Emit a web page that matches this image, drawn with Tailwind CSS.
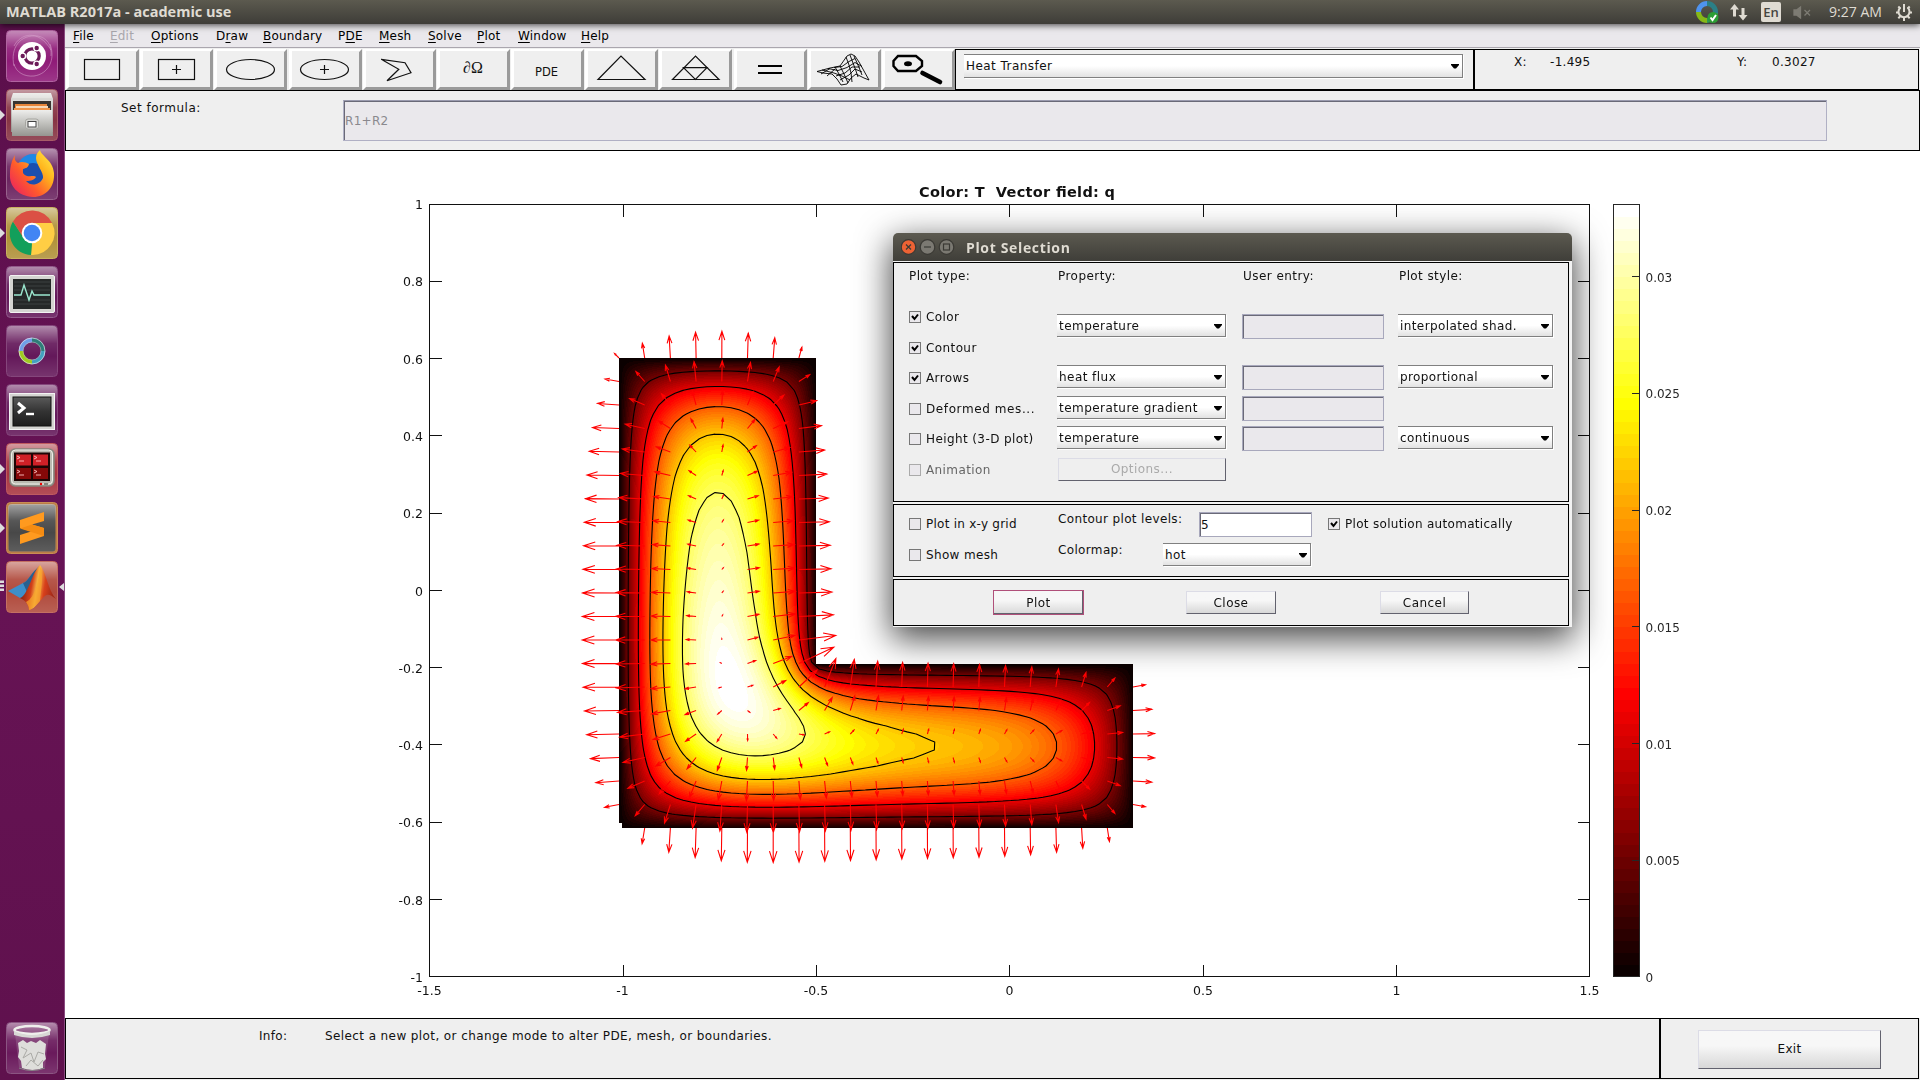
<!DOCTYPE html>
<html lang="en">
<head>
<meta charset="utf-8">
<title>MATLAB R2017a - academic use</title>
<script src="https://cdn.jsdelivr.net/npm/@tailwindcss/browser@4"></script>
</head>
<body class="w-[1920px] h-[1080px] overflow-hidden bg-white font-['DejaVu_Sans',sans-serif] text-[12px] leading-[14px] tracking-[0.3px] text-[#111] flex flex-col">

<header class="relative z-20 h-6 shrink-0 flex items-center bg-linear-to-b from-[#5c5a4f] to-[#3e3d38] shadow-[0_1px_7px_rgba(0,0,0,0.75)] text-[#dfdbd2]">
  <div class="pl-[6px] w-[1696px] font-['Open_Sans',sans-serif] font-bold text-[14.5px] tracking-[0px] whitespace-nowrap">MATLAB R2017a - academic use</div>
  <svg class="w-[224px] h-6" viewBox="1696 0 224 24" fill="none">
    <g stroke-width="5"><path d="M1698.500 12a8.500 8.500 0 0 1 8.500-8.500" stroke="#4f93ee"/><path d="M1707 3.500a8.500 8.500 0 0 1 8.500 8.500v2" stroke="#2b7f86"/><path d="M1698.500 12a8.500 8.500 0 0 0 8.500 8.500" stroke="#86b817"/><path d="M1715.500 13a8.500 8.500 0 0 1-8.500 7.500" stroke="#2f9a54"/></g>
    <circle cx="1713" cy="17.500" r="5.500" fill="#2c9e35"/><path d="M1710.500 17.500l2 2.500 3.500-5" stroke="#fff" stroke-width="2"/>
    <path d="M1734.500 4l4.500 5.500h-3v7h-3v-7h-3zM1743 20.500l4.500-5.500h-3v-7h-3v7h-3z" fill="#dfdbd2"/>
    <rect x="1761" y="2" width="20" height="20" rx="2" fill="#dfdbd2"/>
    <text x="1771" y="17" text-anchor="middle" fill="#46453f" font-family="Open Sans" font-size="13" font-weight="600" letter-spacing="0">En</text>
    <path d="M1794 10h2.500l4-3v11l-4-3h-2.500zM1804.500 10l5.500 5.500M1810 10l-5.500 5.500" stroke="#7d7b73" stroke-width="1.300" fill="#7d7b73"/>
    <text x="1829" y="17" fill="#dfdbd2" font-family="Open Sans" font-size="14" letter-spacing="0" textLength="53" lengthAdjust="spacingAndGlyphs">9:27 AM</text>
    <path d="M1900.500 7.500a5.500 5.500 0 1 0 7 0M1904 4v8" stroke="#dfdbd2" stroke-width="2"/>
    <path d="M1896 12.500h3M1909 12.500h3M1898.300 6.500l2 2M1909.700 6.500l-2 2M1898.300 18.300l2-2M1909.700 18.300l-2-2M1904 18v3" stroke="#dfdbd2" stroke-width="2"/>
  </svg>
</header>

<div class="flex-1 flex min-h-0">
  <aside class="relative w-[65px] shrink-0 bg-linear-to-b from-[#5b0f4b] via-[#671355] to-[#5f114d] border-r border-[#8a4a80] pl-[6px] pt-[6px] flex flex-col gap-[7px]">
    <svg class="size-[52px]" viewBox="0 0 52 52"><defs><linearGradient id="gl" x1="0" y1="0" x2="0" y2="1"><stop offset="0" stop-color="#fff" stop-opacity=".5"/><stop offset=".35" stop-color="#fff" stop-opacity=".08"/><stop offset=".6" stop-color="#fff" stop-opacity="0"/><stop offset="1" stop-color="#fff" stop-opacity=".12"/></linearGradient><linearGradient id="mt" x1="0" y1="0" x2="0" y2="1"><stop offset="0" stop-color="#eeeeec"/><stop offset="1" stop-color="#959590"/></linearGradient><linearGradient id="dk" x1="0" y1="0" x2="0" y2="1"><stop offset="0" stop-color="#5a5a5a"/><stop offset=".5" stop-color="#333"/><stop offset="1" stop-color="#1d1d1d"/></linearGradient></defs>
      <rect x=".5" y=".5" width="51" height="51" rx="4" fill="#8f1b78" stroke="#b063a0"/><rect x="1" y="1" width="50" height="50" rx="4" fill="url(#gl)"/>
      <g fill="none" stroke="#d7a3cc" stroke-opacity=".55"><path d="M8 36C4 18 14 4 32 6c9 2 14 9 13 20M44 14c6 16-2 30-16 32-10 1-18-4-20-12M8 16C14 4 32-2 45 20"/></g>
      <circle cx="26" cy="26" r="14" fill="#fff"/><circle cx="26" cy="26" r="7.200" fill="none" stroke="#6c1a58" stroke-width="3.200"/>
      <g stroke="#fff" stroke-width="1.400" fill="#6c1a58"><circle cx="16.700" cy="26" r="2.900"/><circle cx="30.700" cy="18" r="2.900"/><circle cx="30.700" cy="34" r="2.900"/></g></svg>
    <svg class="size-[52px]" viewBox="0 0 52 52"><rect x=".5" y=".5" width="51" height="51" rx="4" fill="#873444" stroke="#a85c68"/><rect x="1" y="1" width="50" height="50" rx="4" fill="url(#gl)"/>
      <path d="M7 4h38l2 6v33H5V10z" fill="url(#mt)"/><path d="M5 10h42" stroke="#d0d0cc"/><rect x="7" y="12" width="38" height="11" fill="#3a3530"/><path d="M9 15h32v6H9z" fill="#e8863a"/><path d="M10 17h32v5H10z" fill="#f7d9b8"/><path d="M8 19h36v4H8z" fill="#f0954a"/><path d="M6 21h40l1 26H6z" fill="url(#mt)"/><rect x="19.500" y="30" width="13" height="10" rx="2.500" fill="#d8d8d5" stroke="#a5a5a0"/><rect x="22" y="32.500" width="8" height="5.500" fill="#fff" stroke="#444"/></svg>
    <svg class="size-[52px]" viewBox="0 0 52 52"><defs><linearGradient id="ff" x1="1" y1="0" x2="0" y2=".9"><stop offset="0" stop-color="#fff44f"/><stop offset=".35" stop-color="#ffb31c"/><stop offset=".65" stop-color="#ff5a2c"/><stop offset="1" stop-color="#e91e63"/></linearGradient></defs><rect x=".5" y=".5" width="51" height="51" rx="4" fill="#6b2460" stroke="#98628c"/><rect x="1" y="1" width="50" height="50" rx="4" fill="url(#gl)"/>
      <circle cx="27" cy="22" r="16" fill="#1e88e5"/><circle cx="27" cy="26" r="11" fill="#1b4fae"/>
      <path d="M9 7c-1 5 1 7 3 8 3-2 8-1 11 1-1 4-3 4-6 5 0 3-1 5 4 7 4 1 7-1 9 1-2 4-8 4-10 4 5 6 14 4 17-3 1-5-7-14-7-20 0-4 2-6 4-8 1 6 13 10 14 23 1 14-8 24-21 24C12 48 3 38 4 26c0-8 2-14 5-19z" fill="url(#ff)"/></svg>
    <svg class="size-[52px]" viewBox="0 0 52 52"><rect x=".5" y=".5" width="51" height="51" rx="4" fill="#b09139" stroke="#c8b060"/><rect x="1" y="1" width="50" height="50" rx="4" fill="url(#gl)"/>
      <path d="M46 16H26v20L25 48A22 22 0 0 0 46 16z" fill="#ffce44"/><path d="M26 36L25 48A22 22 0 0 1 7 14.500L17 30z" fill="#129f5b"/><path d="M7 14.500A22 22 0 0 1 46 16H26L17 30z" fill="#db5044"/><circle cx="26" cy="26" r="10.300" fill="#fff"/><circle cx="26" cy="26" r="8.300" fill="#4285f4"/></svg>
    <svg class="size-[52px]" viewBox="0 0 52 52"><rect x=".5" y=".5" width="51" height="51" rx="4" fill="#64185a" stroke="#935a8c"/><rect x="1" y="1" width="50" height="50" rx="4" fill="url(#gl)"/><rect x="3.500" y="9.500" width="45" height="37" rx="1.500" fill="#d4d4d1" stroke="#f3f3f3"/><rect x="7" y="13" width="38" height="30" fill="#252828"/><path d="M8 16h36M8 20h36M8 24h36M8 34h36M8 38h36" stroke="#454c4a" stroke-width=".7"/><path d="M8 29h7l3-10 5 15 3-9 2 4h16" fill="none" stroke="#9be8cf" stroke-width="1.400"/></svg>
    <svg class="size-[52px]" viewBox="0 0 52 52"><rect x=".5" y=".5" width="51" height="51" rx="4" fill="#64185a" stroke="#85467c"/><rect x="1" y="1" width="50" height="50" rx="4" fill="url(#gl)"/><g fill="none" stroke-width="4.500"><path d="M15 26a11 11 0 0 1 11-11" stroke="#6f9ee8"/><path d="M26 15a11 11 0 0 1 11 11" stroke="#2e7c78"/><path d="M37 26a11 11 0 0 1-11 11" stroke="#43a0c0"/><path d="M15 26a11 11 0 0 0 11 11" stroke="#9fcb20"/></g><circle cx="26" cy="26" r="13" fill="none" stroke="#e5e5f0" stroke-opacity=".7"/><circle cx="26" cy="26" r="9" fill="none" stroke="#ccc" stroke-opacity=".5"/></svg>
    <svg class="size-[52px]" viewBox="0 0 52 52"><rect x=".5" y=".5" width="51" height="51" rx="4" fill="#64185a" stroke="#85467c"/><rect x="1" y="1" width="50" height="50" rx="4" fill="url(#gl)"/><rect x="3.500" y="9.500" width="45" height="36" fill="#d4d4d1" stroke="#f3f3f3"/><rect x="7" y="13" width="38" height="29" fill="url(#dk)" stroke="#111"/><path d="M12 19l6 5-6 5" fill="none" stroke="#fff" stroke-width="3"/><path d="M20 30h8" stroke="#fff" stroke-width="2.400"/></svg>
    <svg class="size-[52px]" viewBox="0 0 52 52"><rect x=".5" y=".5" width="51" height="51" rx="4" fill="#a83540" stroke="#c05a60"/><rect x="1" y="1" width="50" height="50" rx="4" fill="url(#gl)"/><rect x="4" y="6" width="44" height="37" rx="5" fill="#b9b9b0" stroke="#85857c" stroke-width="1.500"/><rect x="5.500" y="7" width="41" height="34" rx="4" fill="none" stroke="#eeeee8"/><rect x="8" y="9.500" width="36" height="28.500" fill="#1c0505"/><path d="M10 11.500h15v11H10zM27 11.500h15v11H27z" fill="#cf2027"/><path d="M10 25h15v11H10zM27 25h15v11H27z" fill="#850808"/><g fill="none" stroke="#ffc2c2" stroke-width=".9"><path d="M11 13l3 1.500-3 1.500M13 18h5M28 13l3 1.500-3 1.500M30 18h5M11 27l3 1.500-3 1.500M13 32h5M28 27l3 1.500-3 1.500M30 32h5"/></g><circle cx="35" cy="41" r="1.200" fill="#e00"/><rect x="38" y="40" width="4" height="2" fill="#85857c"/></svg>
    <svg class="size-[52px]" viewBox="0 0 52 52"><rect x=".5" y=".5" width="51" height="51" rx="4" fill="#bb7c45" stroke="#c98d55"/><rect x="2.500" y="2.500" width="47" height="47" rx="3" fill="#484848"/><rect x="2" y="2" width="48" height="48" rx="4" fill="url(#gl)"/><path d="M14 18l24-8v9l-12 3.500L38 26v8L14 42v-9l11-3.500L14 26z" fill="#ff9a1f"/><path d="M26 22.500L38 26v8L14 26.500z" fill="#f58c12"/></svg>
    <svg class="size-[52px]" viewBox="0 0 52 52"><defs><linearGradient id="ml" x1="0" y1="0" x2="1" y2=".2"><stop offset="0" stop-color="#5a1010"/><stop offset=".4" stop-color="#d2401a"/><stop offset=".55" stop-color="#fbc04a"/><stop offset=".75" stop-color="#d8401c"/><stop offset="1" stop-color="#a32a17"/></linearGradient></defs><rect x=".5" y=".5" width="51" height="51" rx="4" fill="#b04a3c" stroke="#c47062"/><rect x="1" y="1" width="50" height="50" rx="4" fill="url(#gl)"/><path d="M2 30l15-8c5-1 9-12 17-17-6 10-9 24-15 31l-5 1z" fill="#3d8fca"/><path d="M17 22c5-1 9-12 17-17-5 8-8 20-13 26z" fill="#28608f"/><path d="M14 37c8-2 12-26 20-33 6 7 8 25 16 34-7-5-9-6-14 0-5 5-8 10-13 11 0-5-4-10-9-12z" fill="url(#ml)"/><path d="M34 5c4 8 1 24 0 35-4 4-7 8-11 9 0-4-2-6-3-8C30 36 32 20 34 5z" fill="#f5a32c" fill-opacity=".75"/></svg>
    <svg class="size-[52px] mt-auto mb-[6px]" viewBox="0 0 52 52"><rect x=".5" y=".5" width="51" height="51" rx="4" fill="#6a1a5c" stroke="#8b5482"/><rect x="1" y="1" width="50" height="50" rx="4" fill="url(#gl)"/><path d="M9 12l4 33q13 6 26 0l4-33z" fill="#fff" fill-opacity=".13"/><path d="M12 21l5-3 4 3 4-2 5 2 4-3 6 4-1 10 1 5-3 3v6q-10 4-21 0l-1-7-3-4 1-6z" fill="#dededb"/><path d="M15 25l6 3-4 8 8-5 3 9 4-10 6 2M20 44l5-6 7 6 5-6" fill="none" stroke="#aaaaa6"/><ellipse cx="26" cy="8" rx="17.500" ry="4" fill="none" stroke="#efefec" stroke-width="2.600"/><path d="M8 9q18 8 36 0v4q-18 6-36 0z" fill="#d8d8d5"/><path d="M13 46q13 5 26 0" fill="none" stroke="#888"/></svg>
    <svg class="absolute left-0 top-0 w-[64px] h-[600px] pointer-events-none" viewBox="0 24 64 600" fill="#ddd"><path d="M0 110l5 5-5 5zM0 228l5 5-5 5zM0 464l5 5-5 5zM0 523l5 5-5 5zM64 583l-5 4 5 4zM0 580.500h4v2.500H0zM0 584.500h4v2.500H0zM0 588.500h4v2.500H0z"/></svg>
  </aside>

  <main class="flex-1 flex flex-col min-w-0">
    <nav class="h-6 shrink-0 bg-[#eae8ec] border-b border-[#aaa6ae] flex pl-[8px] pt-[5px] tracking-[0.2px] text-black [&_u]:underline-offset-2">
      <span class="w-[37px]"><u>F</u>ile</span><span class="w-[41px] text-[#a9a7ad]"><u>E</u>dit</span><span class="w-[65px]"><u>O</u>ptions</span><span class="w-[47px]">D<u>r</u>aw</span><span class="w-[75px]"><u>B</u>oundary</span><span class="w-[41px]">P<u>D</u>E</span><span class="w-[49px]"><u>M</u>esh</span><span class="w-[49px]"><u>S</u>olve</span><span class="w-[41px]"><u>P</u>lot</span><span class="w-[63px]"><u>W</u>indow</span><span><u>H</u>elp</span>
    </nav>

    <div class="h-[42px] shrink-0 flex bg-[#efefef]">
      <svg class="w-[890px] h-[42px] shrink-0" viewBox="65 48 890 42" fill="none" stroke="#111" stroke-width="1.200">
        <g id="frames" stroke="none"></g>
        <rect x="84.500" y="59.500" width="35" height="20"/>
        <rect x="158.500" y="59.500" width="36" height="20"/><path d="M172 69.500h9M176.500 65v9"/>
        <ellipse cx="250.500" cy="69.500" rx="24" ry="10"/>
        <ellipse cx="324.500" cy="69.500" rx="24" ry="10"/><path d="M320 69.500h9M324.500 65v9"/>
        <path d="M381.200 59.300L405 62.700l6 10-24 8 11.800-11.400z"/>
        <text x="463" y="73" font-family="Liberation Serif" font-size="16" fill="#111" stroke="none" letter-spacing="0">∂Ω</text>
        <text x="535" y="76" font-size="11.500" fill="#111" stroke="none" letter-spacing="0">PDE</text>
        <path d="M598 79.500L621 56l24 23.500z"/>
        <path d="M672.500 79.500l23-23.500 23.500 23.500zM683.500 67.700h23.500L695.400 79.500z"/>
        <path d="M758 66h24M758 73h24" stroke="#000" stroke-width="2"/>
        <g stroke="#000" stroke-width=".9"><path d="M817 71.500l13-3.500 10-2 7-10 4-2 4 2 4 6 5 9 5 9-5-2-8-4-5 4-4 6-6 1-4-6-5-5-9-1z"/><path d="M822 70l12 3 8 3 8 4M828 68.500l10 2 9-3 8-5 7 4M834 67.500l8-1 7-5 6-3M836 76l9-3 7-6 8 0M840 80l9-5 6-6 7 3M846 57l3 8 2 8 1 9M850 55l3 8 3 8 2 6M854 56l4 9 4 10M835 67l4 7 4 8M840 66l4 8 4 9M821 74l9-5.500M827 76l8-7"/></g>
        <path d="M898 56h18l6 5v5l-6 5h-18l-4.500-5v-5z" stroke="#000" stroke-width="2.400"/><ellipse cx="908" cy="63.700" rx="4" ry="2.500" fill="#000" stroke="none"/><path d="M922.500 73l17.500 9" stroke="#000" stroke-width="4.600" stroke-linecap="round"/>
      </svg>
      <section class="mt-px w-[519px] border border-black pl-[8px] pt-[4px]">
        <div class="w-[499px] h-6 border border-l-0 border-[#808080] bg-linear-to-b from-white from-50% to-[#e2e2e2] flex items-center justify-between pl-[2px] pr-[3px] shadow-[1px_1px_0_#fff]"><span class="tracking-[0.45px]">Heat Transfer</span><svg class="w-2 h-[5px] mt-px" viewBox="0 0 8 5"><path d="M0 0h8v1L5 4.500H3L0 1z"/></svg></div>
      </section>
      <section class="mt-px w-[445px] border border-black flex pt-[5px] pl-[39px]"><span class="w-[36px]">X:</span><span class="w-[187px]">-1.495</span><span class="w-[35px]">Y:</span><span>0.3027</span></section>
    </div>

    <section class="h-[61px] shrink-0 border border-black bg-[#efefef] flex pl-[55px] pt-[9px]">
      <span class="w-[222px] pt-px tracking-[0.5px]">Set formula:</span>
      <div class="w-[1484px] h-[41px] border border-[#b0b0c4] border-t-[#9a9aae] bg-[#eae8ec] shadow-[inset_1px_1px_0_#6a6a78] text-[#8a888e] flex items-center pl-px">R1+R2</div>
    </section>

    <figure class="relative flex-1">
      <canvas id="field" width="1855" height="867" class="absolute inset-0"></canvas>
      <svg class="absolute inset-0 w-[1855px] h-[867px]" viewBox="65 151 1855 867" fill="#111" stroke="none" font-size="12.500" letter-spacing="0">
        <path d="M429.500 204.500H1589.500V976.500H429.500zM623.500 977v-12M623.500 204.500v12M816.500 977v-12M816.500 204.500v12M1009.500 977v-12M1009.500 204.500v12M1203.500 977v-12M1203.500 204.500v12M1396.500 977v-12M1396.500 204.500v12M429.500 281.500h12M429.500 358.500h12M429.500 435.500h12M429.500 513.500h12M429.500 590.500h12M429.500 667.500h12M429.500 744.500h12M429.500 822.500h12M429.500 899.500h12M1589.500 281.500h-12M1589.500 358.500h-12M1589.500 435.500h-12M1589.500 513.500h-12M1589.500 590.500h-12M1589.500 667.500h-12M1589.500 744.500h-12M1589.500 822.500h-12M1589.500 899.500h-12" fill="none" stroke="#111" shape-rendering="crispEdges"/>
        <g text-anchor="end"><text x="423" y="209">1</text><text x="423" y="286">0.8</text><text x="423" y="363.500">0.6</text><text x="423" y="440.500">0.4</text><text x="423" y="518">0.2</text><text x="423" y="595.500">0</text><text x="423" y="672.500">-0.2</text><text x="423" y="749.500">-0.4</text><text x="423" y="827">-0.6</text><text x="423" y="904.500">-0.8</text><text x="423" y="982">-1</text></g>
        <g text-anchor="middle"><text x="429.500" y="995">-1.5</text><text x="622.500" y="995">-1</text><text x="816" y="995">-0.5</text><text x="1009.500" y="995">0</text><text x="1203" y="995">0.5</text><text x="1396.500" y="995">1</text><text x="1589.500" y="995">1.5</text></g>
        <text x="919" y="196.500" font-weight="bold" font-size="14.500" textLength="196" xml:space="preserve">Color: T  Vector field: q</text>
        <g id="bar"></g>
        <path d="M1613.500 204.500h26V976.500h-26zM1640 276.500h-8M1640 393.500h-8M1640 510.500h-8M1640 626.500h-8M1640 743.500h-8M1640 860.500h-8" fill="none" stroke="#262626" shape-rendering="crispEdges"/>
        <g font-size="12" fill="#262626"><text x="1645.500" y="282">0.03</text><text x="1645.500" y="398">0.025</text><text x="1645.500" y="515">0.02</text><text x="1645.500" y="631.500">0.015</text><text x="1645.500" y="748.500">0.01</text><text x="1645.500" y="865">0.005</text><text x="1645.500" y="981.500">0</text></g>
      </svg>
    </figure>

    <footer class="h-[62px] shrink-0 flex bg-[#efefef] pb-px">
      <section class="w-[1595px] border border-black flex pl-[193px] pt-[10px]"><span class="w-[66px]">Info:</span><span class="tracking-[0.4px]">Select a new plot, or change mode to alter PDE, mesh, or boundaries.</span></section>
      <section class="w-[259px] border border-black pl-[37px] pt-[11px]"><div class="w-[183px] h-[39px] border border-[#dcdce6] border-r-[#62626e] border-b-[#62626e] bg-linear-to-b from-[#f7f7f7] from-40% to-[#d8d8d8] flex items-center justify-center pb-px">Exit</div></section>
    </footer>
  </main>
</div>

<!-- Plot Selection dialog -->
<div class="absolute z-30 left-[893px] top-[233px] w-[679px] h-[394px] rounded-t-[5px] bg-[#f2f2f2] shadow-[0_10px_34px_2px_rgba(0,0,0,0.72)] flex flex-col">
  <div class="h-7 shrink-0 rounded-t-[5px] bg-linear-to-b from-[#5c5a50] to-[#3f3e39] flex items-center pl-[8px] gap-[3px] mb-px">
    <svg class="w-[54px] h-4" viewBox="0 0 54 16" fill="none" stroke="#3a3934" stroke-width="1.200"><circle cx="7.500" cy="8" r="7.300" fill="#ec6234"/><path d="M5 5.500l5 5M10 5.500l-5 5"/><circle cx="26.500" cy="8" r="7.300" fill="#7b7972"/><path d="M23 8h7"/><circle cx="45.500" cy="8" r="7.300" fill="#7b7972"/><rect x="42.500" y="5" width="6" height="6"/></svg>
    <span class="pl-[8px] pt-[2px] font-['Open_Sans',sans-serif] font-bold text-[14px] tracking-[0.65px] text-[#dfdbd2]">Plot Selection</span>
  </div>
  <section class="w-[676px] h-[240px] shrink-0 border border-black bg-[#efefef] flex pl-[15px] pt-[6px] mb-px">
    <div class="w-[148px] flex flex-col tracking-[0.4px] [&>label]:flex [&>label]:items-center [&>label]:gap-[5px] [&>label]:whitespace-nowrap">
      <h2 class="mb-[27px]">Plot type:</h2>
      <label class="mb-[17px]"><svg class="size-3 bg-[#eae8ec] border border-[#777]" viewBox="1 1 10 10"><path d="M3 5l2.500 3L9 3.500" fill="none" stroke="#000" stroke-width="2"/></svg>Color</label>
      <label class="mb-[16px]"><svg class="size-3 bg-[#eae8ec] border border-[#777]" viewBox="1 1 10 10"><path d="M3 5l2.500 3L9 3.500" fill="none" stroke="#000" stroke-width="2"/></svg>Contour</label>
      <label class="mb-[17px]"><svg class="size-3 bg-[#eae8ec] border border-[#777]" viewBox="1 1 10 10"><path d="M3 5l2.500 3L9 3.500" fill="none" stroke="#000" stroke-width="2"/></svg>Arrows</label>
      <label class="mb-[16px] tracking-[0.6px]"><i class="size-3 bg-[#eae8ec] border border-[#777]"></i>Deformed mes...</label>
      <label class="mb-[17px]"><i class="size-3 bg-[#eae8ec] border border-[#777]"></i>Height (3-D plot)</label>
      <label class="text-[#666]"><i class="size-3 bg-[#eae8ec] border border-[#aaa]"></i>Animation</label>
    </div>
    <div class="w-[185px] flex flex-col tracking-[0.45px] [&>div]:w-[169px] [&>div]:h-[23px] [&>div]:border [&>div]:border-l-0 [&>div]:border-[#808080] [&>div]:bg-linear-to-b [&>div]:from-white [&>div]:from-50% [&>div]:to-[#e2e2e2] [&>div]:flex [&>div]:items-center [&>div]:justify-between [&>div]:pl-[2px] [&>div]:pr-[3px] [&>div]:shadow-[1px_1px_0_#fff]">
      <h2 class="mb-[31px] ml-px">Property:</h2>
      <div class="mb-[28px]">temperature<svg class="w-2 h-[5px] mt-px" viewBox="0 0 8 5"><path d="M0 0h8v1L5 4.500H3L0 1z"/></svg></div>
      <div class="mb-[8px]">heat flux<svg class="w-2 h-[5px] mt-px" viewBox="0 0 8 5"><path d="M0 0h8v1L5 4.500H3L0 1z"/></svg></div>
      <div class="mb-[7px]">temperature gradient<svg class="w-2 h-[5px] mt-px" viewBox="0 0 8 5"><path d="M0 0h8v1L5 4.500H3L0 1z"/></svg></div>
      <div class="mb-[9px]">temperature<svg class="w-2 h-[5px] mt-px" viewBox="0 0 8 5"><path d="M0 0h8v1L5 4.500H3L0 1z"/></svg></div>
      <p class="w-[168px] h-[23px] ml-px pb-px border border-[#dcdce6] border-r-[#62626e] border-b-[#62626e] text-[#aaa] flex items-center justify-center">Options...</p>
    </div>
    <div class="w-[156px] flex flex-col tracking-[0.45px] [&>div]:w-[142px] [&>div]:h-[25px] [&>div]:border [&>div]:border-[#a8a8bc] [&>div]:bg-[#eae8ec] [&>div]:shadow-[inset_1px_1px_0_#6a6a78]">
      <h2 class="mb-[31px] ml-px">User entry:</h2>
      <div class="mb-[26px]"></div><div class="mb-[6px]"></div><div class="mb-[5px]"></div><div></div>
    </div>
    <div class="w-[160px] flex flex-col tracking-[0.4px] [&>div]:w-[155px] [&>div]:h-[23px] [&>div]:border [&>div]:border-l-0 [&>div]:border-[#808080] [&>div]:bg-linear-to-b [&>div]:from-white [&>div]:from-50% [&>div]:to-[#e2e2e2] [&>div]:flex [&>div]:items-center [&>div]:justify-between [&>div]:pl-[2px] [&>div]:pr-[3px] [&>div]:shadow-[1px_1px_0_#fff]">
      <h2 class="mb-[31px] ml-px">Plot style:</h2>
      <div class="mb-[28px]">interpolated shad.<svg class="w-2 h-[5px] mt-px" viewBox="0 0 8 5"><path d="M0 0h8v1L5 4.500H3L0 1z"/></svg></div>
      <div class="mb-[38px]">proportional<svg class="w-2 h-[5px] mt-px" viewBox="0 0 8 5"><path d="M0 0h8v1L5 4.500H3L0 1z"/></svg></div>
      <div>continuous<svg class="w-2 h-[5px] mt-px" viewBox="0 0 8 5"><path d="M0 0h8v1L5 4.500H3L0 1z"/></svg></div>
    </div>
  </section>
  <section class="w-[676px] h-[73px] shrink-0 border border-black bg-[#efefef] flex pl-[15px] mt-px mb-px tracking-[0.35px]">
    <div class="w-[149px] pt-[12px] flex flex-col gap-[17px]">
      <label class="flex items-center gap-[5px] whitespace-nowrap tracking-[0.25px]"><i class="size-3 bg-[#eae8ec] border border-[#777]"></i>Plot in x-y grid</label>
      <label class="flex items-center gap-[5px] whitespace-nowrap"><i class="size-3 bg-[#eae8ec] border border-[#777]"></i>Show mesh</label>
    </div>
    <div class="w-[270px] pt-[7px] flex flex-col gap-[6px]">
      <div class="flex"><span class="w-[141px] whitespace-nowrap">Contour plot levels:</span><div class="w-[113px] h-[25px] border border-[#a8a8bc] bg-white shadow-[inset_1px_1px_0_#6a6a78] flex items-center pl-px">5</div></div>
      <div class="flex"><span class="w-[105px] whitespace-nowrap">Colormap:</span><div class="w-[148px] h-[23px] border border-l-0 border-[#808080] bg-linear-to-b from-white from-50% to-[#e2e2e2] flex items-center justify-between pl-[2px] pr-[3px] shadow-[1px_1px_0_#fff]">hot<svg class="w-2 h-[5px] mt-px" viewBox="0 0 8 5"><path d="M0 0h8v1L5 4.500H3L0 1z"/></svg></div></div>
    </div>
    <label class="pt-[12px] flex items-center gap-[5px] h-[26px] whitespace-nowrap tracking-[0.3px]"><svg class="size-3 bg-[#eae8ec] border border-[#777]" viewBox="1 1 10 10"><path d="M3 5l2.500 3L9 3.500" fill="none" stroke="#000" stroke-width="2"/></svg>Plot solution automatically</label>
  </section>
  <section class="w-[676px] h-[47px] shrink-0 mt-px border border-black bg-[#efefef] flex items-center pl-[99px] tracking-[0.45px] [&>div]:bg-linear-to-b [&>div]:from-[#f7f7f7] [&>div]:from-40% [&>div]:to-[#d8d8d8] [&>div]:flex [&>div]:items-center [&>div]:justify-center">
    <div class="w-[91px] h-[25px] border border-[#b0507a] shadow-[inset_-1px_-1px_0_#62626e]">Plot</div>
    <div class="w-[90px] h-[23px] ml-[102px] border border-[#dcdce6] border-r-[#62626e] border-b-[#62626e]">Close</div>
    <div class="w-[89px] h-[23px] ml-[104px] border border-[#dcdce6] border-r-[#62626e] border-b-[#62626e]">Cancel</div>
  </section>
</div>

<script>
const NS = 'http://www.w3.org/2000/svg';
function add(parent, tag, attrs) {
  const el = document.createElementNS(NS, tag);
  for (const k in attrs) el.setAttribute(k, attrs[k]);
  parent.appendChild(el);
}

// raised frames of the twelve toolbar buttons
const frames = document.getElementById('frames');
for (let i = 0; i < 12; i++) {
  const x = Math.round(66 + i * 74.17), w = 73;
  add(frames, 'rect', {x, y: 49, width: w, height: 41, fill: '#fff'});
  add(frames, 'path', {d: `M${x + w} 49v41H${x}l3-3h${w - 6}V52z`, fill: '#9a9a9a'});
  add(frames, 'rect', {x: x + 3, y: 51, width: w - 6, height: 36, fill: '#efefef'});
}

// 64-entry "hot" colour map
function hot(i) {
  i = Math.max(0, Math.min(63, i)) + 1;
  const c = v => Math.round(255 * Math.max(0, Math.min(1, v)));
  return [c(i / 24), c((i - 24) / 24), c((i - 48) / 16)];
}
const bar = document.getElementById('bar'), step = 772.5 / 64;
for (let i = 0; i < 64; i++)
  add(bar, 'rect', {x: 1613.5, y: 977 - (i + 1) * step, width: 26, height: step + 0.4, fill: `rgb(${hot(i)})`, 'shape-rendering': 'crispEdges'});

// Poisson problem on the L-shaped plate, zero temperature on the boundary
const X0 = 619, Y0 = 358, W = 514, H = 470, XR = 197, YR = 306;
const N = W + 1, u = new Float32Array(N * (H + 1));
const omega = 1.975, f = 1 / (386.4 * 386.4);
for (let it = 0; it < 600; it++)
  for (let j = 1; j < H; j++) {
    const end = j > YR ? W : XR;
    for (let i = 1; i < end; i++) {
      const p = j * N + i;
      u[p] += omega * ((u[p - 1] + u[p + 1] + u[p - N] + u[p + N] + f) / 4 - u[p]);
    }
  }
let peak = 0;
for (const v of u) if (v > peak) peak = v;

const ctx = document.getElementById('field').getContext('2d');
const img = ctx.createImageData(W, H);
for (let j = 0; j < H; j++)
  for (let i = 0; i < W; i++) {
    const q = (j * W + i) * 4;
    if ((i >= XR && j < YR) || (i < 3 && j > 464)) continue;
    const [r, g, b] = hot(Math.floor(u[j * N + i] / peak * 64));
    img.data[q] = r; img.data[q + 1] = g; img.data[q + 2] = b; img.data[q + 3] = 255;
  }
ctx.putImageData(img, X0 - 65, Y0 - 151);
ctx.translate(-65, -151);

// five contour levels, traced cell by cell
ctx.strokeStyle = '#000';
ctx.lineWidth = 1.1;
ctx.lineCap = 'round';
const S = 8, at = (i, j) => (i > W || j > H) ? 0 : u[j * N + i];
const trim = [1, 1, 1, 0.986, 1.003];
for (let k = 1; k <= 5; k++) {
  const L = peak * k / 6 * trim[k - 1];
  ctx.beginPath();
  for (let j = 0; j < H; j += S)
    for (let i = 0; i < W; i += S) {
      const a = at(i, j), b = at(i + S, j), c = at(i + S, j + S), d = at(i, j + S), pts = [];
      if ((a > L) !== (b > L)) pts.push([i + S * (L - a) / (b - a), j]);
      if ((b > L) !== (c > L)) pts.push([i + S, j + S * (L - b) / (c - b)]);
      if ((c > L) !== (d > L)) pts.push([i + S * (L - d) / (c - d), j + S]);
      if ((d > L) !== (a > L)) pts.push([i, j + S * (L - a) / (d - a)]);
      for (let s = 0; s + 1 < pts.length; s += 2) {
        ctx.moveTo(X0 + pts[s][0], Y0 + pts[s][1]);
        ctx.lineTo(X0 + pts[s + 1][0], Y0 + pts[s + 1][1]);
      }
    }
  ctx.stroke();
}

// heat flux arrows on a 21 x 21 lattice
ctx.strokeStyle = '#f00';
ctx.lineWidth = 1.1;
ctx.lineCap = 'butt';
const arrows = [];
for (let a = 0; a <= 20; a++)
  for (let b = 0; b <= 20; b++) {
    const x = a * W / 20, y = b * H / 20;
    if ((a > 7 && b < 14) || (b === 20 && (a === 0 || a === 20))) continue;
    const M = 6, i = Math.round(Math.max(M, Math.min(W - M, x))), j = Math.round(Math.max(M, Math.min(H - M, y)));
    const gx = -(u[j * N + i + 2] - u[j * N + i - 2]), gy = -(u[(j + 2) * N + i] - u[(j - 2) * N + i]);
    arrows.push([x + X0, y + Y0, gx, gy]);
  }
const big = Math.max(...arrows.map(v => Math.hypot(v[2], v[3])));
ctx.beginPath();
for (const [x, y, gx, gy] of arrows) {
  const vx = gx / big * 38.5, vy = gy / big * 38.5, ex = x + vx, ey = y + vy;
  ctx.moveTo(x, y); ctx.lineTo(ex, ey);
  ctx.moveTo(ex - 0.33 * (vx + 0.33 * vy), ey - 0.33 * (vy - 0.33 * vx));
  ctx.lineTo(ex, ey);
  ctx.lineTo(ex - 0.33 * (vx - 0.33 * vy), ey - 0.33 * (vy + 0.33 * vx));
}
ctx.stroke();
</script>
</body>
</html>
